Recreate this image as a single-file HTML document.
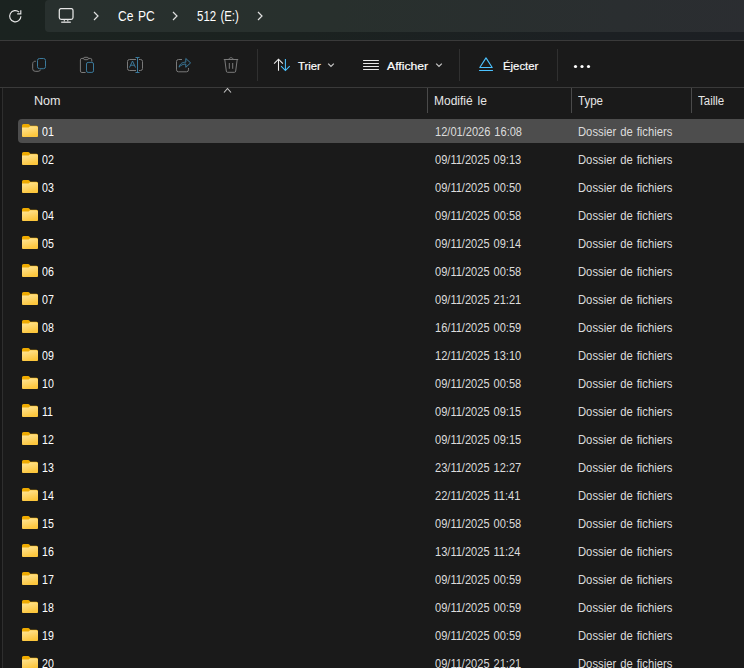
<!DOCTYPE html>
<html><head><meta charset="utf-8">
<style>
*{margin:0;padding:0;box-sizing:border-box}
html,body{width:744px;height:668px;overflow:hidden;background:#1a1a1a;font-family:"Liberation Sans",sans-serif;color:#fff}
.abs{position:absolute}
#top{position:absolute;left:0;top:0;width:744px;height:40px;background:linear-gradient(90deg,#1b2320 0%,#1b2220 40%,#1c2023 80%,#1c1f23 100%)}
#addr{position:absolute;left:45px;top:0;width:720px;height:32px;border-radius:4px;background:linear-gradient(90deg,#28302e 0%,#28302d 40%,#2a2e30 80%,#2b2d31 100%)}
#l40{position:absolute;left:0;top:40px;width:744px;height:1px;background:#3a3a3a}
#cmd{position:absolute;left:0;top:41px;width:744px;height:46px;background:#1a1a1a}
#l87{position:absolute;left:0;top:87px;width:744px;height:1px;background:#3a3a3a}
#vl{position:absolute;left:2px;top:88px;width:1px;height:580px;background:#2e2e2e}
#nav{position:absolute;left:0;top:88px;width:2px;height:580px;background:#161616}
.sep{position:absolute;top:49px;width:1px;height:32px;background:#303030}
.crumb{position:absolute;top:8px;font-size:14.8px;word-spacing:1.4px;color:#fff;line-height:16px;transform-origin:0 0;white-space:nowrap}
.lbl{position:absolute;top:58.5px;font-size:11px;color:#fff;line-height:14px;-webkit-text-stroke:0.18px #fff;transform-origin:0 0;white-space:nowrap}
.hd{position:absolute;top:94px;font-size:12px;word-spacing:1.6px;color:#e6e6e6;line-height:14px;white-space:nowrap}
.cdiv{position:absolute;top:88px;width:1px;height:25px;background:#4a4a4a}
.row{position:absolute;left:18px;width:740px;height:24px;border-radius:4px}
.row.sel{background:#4d4d4d}
.fi{position:absolute;left:4px;top:5px}
.row span{position:absolute;top:5.8px;font-size:12.5px;word-spacing:1px;line-height:14px;white-space:nowrap;transform-origin:0 0}
.nm{left:24px;color:#fff;transform:scaleX(0.85)}
.dt{left:416.5px;color:#dcdcdc;transform:scaleX(0.885)}
.ty{left:560px;color:#dcdcdc;transform:scaleX(0.9)}

</style></head><body>
<svg width="0" height="0" style="position:absolute">
<defs>
<linearGradient id="fg" x1="0" y1="0" x2="0.4" y2="1">
<stop offset="0" stop-color="#ffe79c"/><stop offset="1" stop-color="#fcc63d"/>
</linearGradient>
<symbol id="folder" viewBox="0 0 16 13">
<path d="M1.5 0H6.3Q6.9 0 7.3 0.5L8.3 1.8H14.5a1.5 1.5 0 0 1 1.5 1.5V11.5a1.5 1.5 0 0 1-1.5 1.5H1.5a1.5 1.5 0 0 1-1.5-1.5V1.5a1.5 1.5 0 0 1 1.5-1.5z" fill="#eeaa00"/>
<path d="M0 3.6H6.6L8.1 2.3H14.5a1.5 1.5 0 0 1 1.5 1.5V11.5a1.5 1.5 0 0 1-1.5 1.5H1.5a1.5 1.5 0 0 1-1.5-1.5z" fill="url(#fg)"/>
</symbol>
</defs></svg>

<div id="top"></div>
<div id="addr"></div>
<!-- refresh -->
<svg class="abs" style="left:6.8px;top:7.8px" width="16" height="16" viewBox="0 0 16 16">
<path d="M13.9 8.25A5.6 5.6 0 1 1 12.1 4.1" fill="none" stroke="#e8e8e8" stroke-width="1.15"/>
<path d="M13.8 2.3V5.8H10.2" fill="none" stroke="#e8e8e8" stroke-width="1.15"/>
</svg>
<!-- monitor -->
<svg class="abs" style="left:58px;top:8px" width="16" height="16" viewBox="0 0 16 16">
<rect x="1.3" y="0.6" width="13.7" height="10.7" rx="1.8" fill="none" stroke="#e6e6e6" stroke-width="1.25"/>
<path d="M3.2 14.2H12.8" stroke="#e0e0e0" stroke-width="1.3"/>
<path d="M6.3 11.8V13.6M9.8 11.8V13.6" stroke="#d8d8d8" stroke-width="1.1"/>
</svg>
<svg class="abs" style="left:92px;top:11px" width="8" height="10" viewBox="0 0 8 10"><path d="M2 1L6 5L2 9" fill="none" stroke="#e0e0e0" stroke-width="1.2"/></svg>
<div class="crumb" style="left:118px;transform:scaleX(0.815)">Ce PC</div>
<svg class="abs" style="left:171px;top:11px" width="8" height="10" viewBox="0 0 8 10"><path d="M2 1L6 5L2 9" fill="none" stroke="#e0e0e0" stroke-width="1.2"/></svg>
<div class="crumb" style="left:196.5px;transform:scaleX(0.775)">512 (E:)</div>
<svg class="abs" style="left:256px;top:11px" width="8" height="10" viewBox="0 0 8 10"><path d="M2 1L6 5L2 9" fill="none" stroke="#e0e0e0" stroke-width="1.2"/></svg>

<div id="l40"></div>
<div id="cmd"></div>
<div id="l87"></div>

<!-- copy -->
<svg class="abs" style="left:31px;top:57px" width="16" height="16" viewBox="0 0 16 16">
<path d="M4.8 4.3A2.5 2.5 0 0 0 1.7 6.7V11.8A2.5 2.5 0 0 0 4.2 14.3H7.2A2.5 2.5 0 0 0 9.6 12.6" fill="none" stroke="#7a7a7a" stroke-width="1"/>
<rect x="6.5" y="1.5" width="8" height="10.2" rx="2" fill="none" stroke="#3b7a9c" stroke-width="1"/>
</svg>
<!-- paste -->
<svg class="abs" style="left:79px;top:56px" width="16" height="18" viewBox="0 0 16 18">
<path d="M4.6 2.4H2.9A1.5 1.5 0 0 0 1.4 3.9V15A1.5 1.5 0 0 0 2.9 16.5H6.6" fill="none" stroke="#7a7a7a" stroke-width="1"/>
<path d="M9.4 2.4H11.3A1.5 1.5 0 0 1 12.8 3.9V5.6" fill="none" stroke="#7a7a7a" stroke-width="1"/>
<rect x="4.6" y="1.3" width="4.8" height="2.4" rx="1.2" fill="none" stroke="#7a7a7a" stroke-width="1"/>
<rect x="7.5" y="6.4" width="7" height="10" rx="1.6" fill="none" stroke="#3b7a9c" stroke-width="1"/>
</svg>
<!-- rename -->
<svg class="abs" style="left:126px;top:56px" width="18" height="18" viewBox="0 0 18 18">
<path d="M10 3.5H3.5A2 2 0 0 0 1.5 5.5V12.5A2 2 0 0 0 3.5 14.5H10" fill="none" stroke="#7a7a7a" stroke-width="1"/>
<path d="M13 3.5H14.5A2 2 0 0 1 16.5 5.5V12.5A2 2 0 0 1 14.5 14.5H13" fill="none" stroke="#7a7a7a" stroke-width="1"/>
<path d="M11.5 1.5V16.5M9.5 1.5H13.5M9.5 16.5H13.5" fill="none" stroke="#3b7a9c" stroke-width="1"/>
<path d="M3.5 11.5L6.5 5L9.5 11.5M4.6 9.2H8.4" fill="none" stroke="#3b7a9c" stroke-width="1"/>
</svg>
<!-- share -->
<svg class="abs" style="left:175px;top:57px" width="16" height="16" viewBox="0 0 16 16">
<path d="M7 2.5H3.5A2 2 0 0 0 1.5 4.5V12.8A2 2 0 0 0 3.5 14.8H11.5A2 2 0 0 0 13.5 12.8V11" fill="none" stroke="#7a7a7a" stroke-width="1"/>
<path d="M4 10.2C5 6.5 7.5 5.2 10.8 5.2V1.5L15.6 5.9L10.8 10.3V7C8.2 7 6 8 4 10.2Z" fill="none" stroke="#3b7a9c" stroke-width="1" stroke-linejoin="round"/>
</svg>
<!-- delete -->
<svg class="abs" style="left:223px;top:56px" width="16" height="17" viewBox="0 0 16 17">
<path d="M0.8 3.5H15.2" stroke="#7a7a7a" stroke-width="1"/>
<path d="M6 3.3C6 1.2 10 1.2 10 3.3" fill="none" stroke="#7a7a7a" stroke-width="1"/>
<path d="M1.8 3.6L3.3 15A1.3 1.3 0 0 0 4.5 16.3H11.5A1.3 1.3 0 0 0 12.7 15L14.2 3.6" fill="none" stroke="#7a7a7a" stroke-width="1"/>
<path d="M6.3 7V12.8M9.7 7V12.8" stroke="#7a7a7a" stroke-width="1"/>
</svg>

<div class="sep" style="left:257px"></div>
<!-- sort -->
<svg class="abs" style="left:273px;top:57px" width="18" height="16" viewBox="0 0 18 16">
<path d="M5.5 13.8V2.4M1.1 6.6L5.5 2.2L9.9 6.6" fill="none" stroke="#ececec" stroke-width="1.05"/>
<path d="M12.4 1.9V13.2M8.1 9.2L12.4 13.5L16.7 9.2" fill="none" stroke="#4cc2ff" stroke-width="1.05"/>
</svg>
<div class="lbl" style="left:298px;transform:scaleX(1.03)">Trier</div>
<svg class="abs" style="left:327px;top:62px" width="8" height="6" viewBox="0 0 8 6"><path d="M1.2 1.6L4 4.4L6.8 1.6" fill="none" stroke="#c4c4c4" stroke-width="1.3"/></svg>
<!-- view -->
<svg class="abs" style="left:362px;top:59px" width="18" height="12" viewBox="0 0 18 12">
<path d="M1.5 1.5H16.5M1.5 4.5H16.5M1.5 7.5H16.5M1.5 10.5H16.5" stroke="#e8e8e8" stroke-width="1" stroke-linecap="round"/>
</svg>
<div class="lbl" style="left:387px;transform:scaleX(1.11)">Afficher</div>
<svg class="abs" style="left:435px;top:62px" width="8" height="6" viewBox="0 0 8 6"><path d="M1.2 1.6L4 4.4L6.8 1.6" fill="none" stroke="#c4c4c4" stroke-width="1.3"/></svg>
<div class="sep" style="left:459px"></div>
<!-- eject -->
<svg class="abs" style="left:478px;top:56px" width="16" height="16" viewBox="0 0 16 16">
<path d="M8 1.9L14.2 11.5H1.8Z" fill="none" stroke="#4cc2ff" stroke-width="1.1" stroke-linejoin="round"/>
<path d="M1.5 14.5H14.5" stroke="#4cc2ff" stroke-width="1.1" stroke-linecap="round"/>
</svg>
<div class="lbl" style="left:502.5px;transform:scaleX(1.03)">Éjecter</div>
<div class="sep" style="left:557px"></div>
<svg class="abs" style="left:572px;top:63.5px" width="20" height="5" viewBox="0 0 20 5">
<circle cx="3.5" cy="2.5" r="1.6" fill="#fff"/><circle cx="10" cy="2.5" r="1.6" fill="#fff"/><circle cx="16.5" cy="2.5" r="1.6" fill="#fff"/>
</svg>

<!-- header -->
<div id="nav"></div><div id="vl"></div>
<div class="hd" style="left:34px;transform:scaleX(1.05);transform-origin:0 0">Nom</div>
<svg class="abs" style="left:223px;top:87px" width="10" height="7" viewBox="0 0 10 7"><path d="M1 5.5L4.5 1.5L8 5.5" fill="none" stroke="#c8c8c8" stroke-width="1.1"/></svg>
<div class="cdiv" style="left:427px"></div>
<div class="hd" style="left:434px">Modifié le</div>
<div class="cdiv" style="left:571px"></div>
<div class="hd" style="left:578px;transform:scaleX(0.96);transform-origin:0 0">Type</div>
<div class="cdiv" style="left:691px"></div>
<div class="hd" style="left:698px;transform:scaleX(0.957);transform-origin:0 0">Taille</div>

<div class="row sel" style="top:119px"><svg class="fi" width="16" height="13" viewBox="0 0 16 13"><use href="#folder"/></svg><span class="nm">01</span><span class="dt">12/01/2026 16:08</span><span class="ty">Dossier de fichiers</span></div>
<div class="row" style="top:147px"><svg class="fi" width="16" height="13" viewBox="0 0 16 13"><use href="#folder"/></svg><span class="nm">02</span><span class="dt">09/11/2025 09:13</span><span class="ty">Dossier de fichiers</span></div>
<div class="row" style="top:175px"><svg class="fi" width="16" height="13" viewBox="0 0 16 13"><use href="#folder"/></svg><span class="nm">03</span><span class="dt">09/11/2025 00:50</span><span class="ty">Dossier de fichiers</span></div>
<div class="row" style="top:203px"><svg class="fi" width="16" height="13" viewBox="0 0 16 13"><use href="#folder"/></svg><span class="nm">04</span><span class="dt">09/11/2025 00:58</span><span class="ty">Dossier de fichiers</span></div>
<div class="row" style="top:231px"><svg class="fi" width="16" height="13" viewBox="0 0 16 13"><use href="#folder"/></svg><span class="nm">05</span><span class="dt">09/11/2025 09:14</span><span class="ty">Dossier de fichiers</span></div>
<div class="row" style="top:259px"><svg class="fi" width="16" height="13" viewBox="0 0 16 13"><use href="#folder"/></svg><span class="nm">06</span><span class="dt">09/11/2025 00:58</span><span class="ty">Dossier de fichiers</span></div>
<div class="row" style="top:287px"><svg class="fi" width="16" height="13" viewBox="0 0 16 13"><use href="#folder"/></svg><span class="nm">07</span><span class="dt">09/11/2025 21:21</span><span class="ty">Dossier de fichiers</span></div>
<div class="row" style="top:315px"><svg class="fi" width="16" height="13" viewBox="0 0 16 13"><use href="#folder"/></svg><span class="nm">08</span><span class="dt">16/11/2025 00:59</span><span class="ty">Dossier de fichiers</span></div>
<div class="row" style="top:343px"><svg class="fi" width="16" height="13" viewBox="0 0 16 13"><use href="#folder"/></svg><span class="nm">09</span><span class="dt">12/11/2025 13:10</span><span class="ty">Dossier de fichiers</span></div>
<div class="row" style="top:371px"><svg class="fi" width="16" height="13" viewBox="0 0 16 13"><use href="#folder"/></svg><span class="nm">10</span><span class="dt">09/11/2025 00:58</span><span class="ty">Dossier de fichiers</span></div>
<div class="row" style="top:399px"><svg class="fi" width="16" height="13" viewBox="0 0 16 13"><use href="#folder"/></svg><span class="nm">11</span><span class="dt">09/11/2025 09:15</span><span class="ty">Dossier de fichiers</span></div>
<div class="row" style="top:427px"><svg class="fi" width="16" height="13" viewBox="0 0 16 13"><use href="#folder"/></svg><span class="nm">12</span><span class="dt">09/11/2025 09:15</span><span class="ty">Dossier de fichiers</span></div>
<div class="row" style="top:455px"><svg class="fi" width="16" height="13" viewBox="0 0 16 13"><use href="#folder"/></svg><span class="nm">13</span><span class="dt">23/11/2025 12:27</span><span class="ty">Dossier de fichiers</span></div>
<div class="row" style="top:483px"><svg class="fi" width="16" height="13" viewBox="0 0 16 13"><use href="#folder"/></svg><span class="nm">14</span><span class="dt">22/11/2025 11:41</span><span class="ty">Dossier de fichiers</span></div>
<div class="row" style="top:511px"><svg class="fi" width="16" height="13" viewBox="0 0 16 13"><use href="#folder"/></svg><span class="nm">15</span><span class="dt">09/11/2025 00:58</span><span class="ty">Dossier de fichiers</span></div>
<div class="row" style="top:539px"><svg class="fi" width="16" height="13" viewBox="0 0 16 13"><use href="#folder"/></svg><span class="nm">16</span><span class="dt">13/11/2025 11:24</span><span class="ty">Dossier de fichiers</span></div>
<div class="row" style="top:567px"><svg class="fi" width="16" height="13" viewBox="0 0 16 13"><use href="#folder"/></svg><span class="nm">17</span><span class="dt">09/11/2025 00:59</span><span class="ty">Dossier de fichiers</span></div>
<div class="row" style="top:595px"><svg class="fi" width="16" height="13" viewBox="0 0 16 13"><use href="#folder"/></svg><span class="nm">18</span><span class="dt">09/11/2025 00:59</span><span class="ty">Dossier de fichiers</span></div>
<div class="row" style="top:623px"><svg class="fi" width="16" height="13" viewBox="0 0 16 13"><use href="#folder"/></svg><span class="nm">19</span><span class="dt">09/11/2025 00:59</span><span class="ty">Dossier de fichiers</span></div>
<div class="row" style="top:651px"><svg class="fi" width="16" height="13" viewBox="0 0 16 13"><use href="#folder"/></svg><span class="nm">20</span><span class="dt">09/11/2025 21:21</span><span class="ty">Dossier de fichiers</span></div>
</body></html>
